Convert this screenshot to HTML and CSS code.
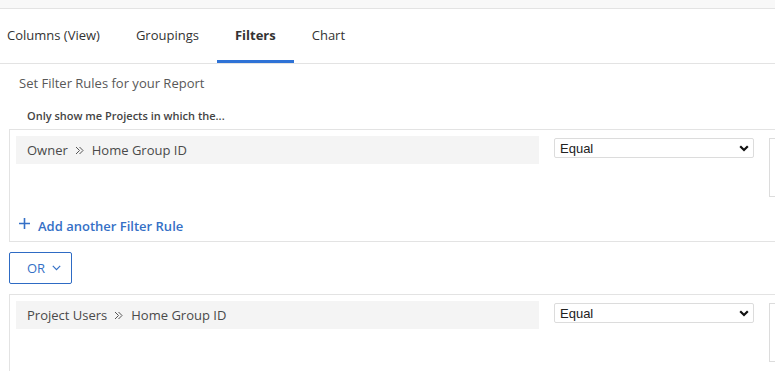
FILE: index.html
```html
<!DOCTYPE html>
<html>
<head>
  <meta charset="UTF-8" />
  <meta name="viewport" content="width=device-width, initial-scale=1.0" />
  <title>Report Filters</title>
  <link rel="stylesheet" href="styles.css">
</head>
<body>
  <div class="topbar"></div>

  <!-- Вкладки отчёта -->
  <div class="tabs">
    <div class="tab first">Columns (View)</div>
    <div class="tab">Groupings</div>
    <div class="tab active">Filters</div>
    <div class="tab">Chart</div>
  </div>

  <div class="content">
    <div class="section-title">Set Filter Rules for your Report</div>
    <div class="section-hint">Only show me Projects in which the...</div>

    <!-- Первая группа правил -->
    <div class="rule-group">
      <div class="rule">
        <div class="rule-field">
          <span>Owner</span>
          <svg class="crumb" width="9" height="9" viewBox="0 0 9 9"><path d="M1 1l3.5 3.5L1 8M4.5 1L8 4.5 4.5 8" fill="none" stroke="#555" stroke-width="1"/></svg>
          <span>Home Group ID</span>
        </div>
        <div class="rule-select">
          <span>Equal</span>
          <svg width="10" height="7" viewBox="0 0 10 7"><path d="M1.2 1.2L5 5l3.8-3.8" fill="none" stroke="#111" stroke-width="2.2"/></svg>
        </div>
        <div class="rule-value"></div>
      </div>
      <div class="add-rule">
        <svg width="11" height="11" viewBox="0 0 11 11"><path d="M5.5 0v11M0 5.5h11" stroke="#3570c6" stroke-width="1.6"/></svg>
        <span>Add another Filter Rule</span>
      </div>
    </div>

    <div class="or-button">
      <span>OR</span>
      <svg width="9" height="6" viewBox="0 0 9 6"><path d="M0.8 0.8L4.5 4.6 8.2 0.8" fill="none" stroke="#3570c6" stroke-width="1.2"/></svg>
    </div>

    <!-- Вторая группа правил -->
    <div class="rule-group tall">
      <div class="rule">
        <div class="rule-field">
          <span>Project Users</span>
          <svg class="crumb" width="9" height="9" viewBox="0 0 9 9"><path d="M1 1l3.5 3.5L1 8M4.5 1L8 4.5 4.5 8" fill="none" stroke="#555" stroke-width="1"/></svg>
          <span>Home Group ID</span>
        </div>
        <div class="rule-select">
          <span>Equal</span>
          <svg width="10" height="7" viewBox="0 0 10 7"><path d="M1.2 1.2L5 5l3.8-3.8" fill="none" stroke="#111" stroke-width="2.2"/></svg>
        </div>
        <div class="rule-value"></div>
      </div>
    </div>
  </div>
</body>
</html>
```

FILE: styles.css
```css
:root {
  --blue: #2e72d6;
  --link: #3570c6;
  --border: #e3e3e3;
  --text: #3a3a3a;
  --muted: #585858;
}

body {
  margin: 0;
  font-family: "Open Sans", sans-serif;
  color: var(--text);
  background: #fff;
  overflow: hidden;
}

.topbar {
  height: 8px;
  background: #f8f8f8;
  border-bottom: 1px solid var(--border);
}

.tabs {
  display: flex;
  height: 54px;
  border-bottom: 1px solid var(--border);
}

.tab {
  display: flex;
  align-items: center;
  padding: 1px 18px 0;
  font-size: 13px;
  color: #333;
  border-bottom: 3px solid transparent;
}

.tab.first {
  padding-left: 7px;
}

.tab.active {
  font-weight: 700;
  border-bottom-color: var(--blue);
}

.content {
  padding-left: 9px;
}

.section-title {
  margin: 9px 0 0 10px;
  height: 20px;
  line-height: 20px;
  font-size: 13px;
  color: var(--muted);
}

.section-hint {
  margin: 13px 0 0 18px;
  height: 20px;
  line-height: 20px;
  font-size: 11px;
  font-weight: 600;
  color: #444;
}

.rule-group {
  width: 900px;
  margin-top: 3px;
  padding: 6px 6px 5px;
  border: 1px solid var(--border);
}

.rule-group.tall {
  min-height: 100px;
}

.rule {
  display: flex;
  align-items: flex-start;
}

.rule > * {
  flex-shrink: 0;
}

.rule-field {
  display: flex;
  align-items: center;
  box-sizing: border-box;
  width: 523px;
  height: 28px;
  padding-left: 11px;
  background: #f4f4f4;
  font-size: 13px;
  color: #4a4a4a;
}

.crumb {
  margin: 0 8px 0 7px;
}

.rule-select {
  display: flex;
  align-items: center;
  justify-content: space-between;
  box-sizing: border-box;
  width: 200px;
  height: 20px;
  margin: 2px 0 0 15px;
  padding: 0 4px 0 5px;
  border: 1px solid #dcdcdc;
  border-radius: 2px;
  font-family: "Liberation Sans", Arial, sans-serif;
  font-size: 13px;
  color: #222;
}

.rule-value {
  box-sizing: border-box;
  width: 100px;
  height: 59px;
  margin: 2px 0 0 15px;
  border: 1px solid #dcdcdc;
}

.add-rule {
  display: flex;
  align-items: center;
  gap: 8px;
  height: 20px;
  margin: 19px 0 0 3px;
  font-size: 13px;
  font-weight: 600;
  color: var(--link);
}

.add-rule svg {
  margin-top: -6px;
}

.or-button {
  display: flex;
  align-items: center;
  gap: 7px;
  box-sizing: border-box;
  width: 63px;
  height: 32px;
  margin: 10px 0;
  padding-left: 17px;
  border: 1px solid #2e6bc4;
  border-radius: 2px;
  font-size: 13px;
  color: var(--link);
}

.or-button + .rule-group {
  margin-top: 0;
}
```
